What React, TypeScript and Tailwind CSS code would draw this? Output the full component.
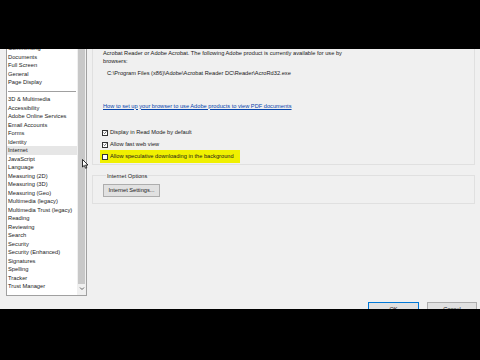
import React from "react";

const items = [
  "Commenting",
  "Documents",
  "Full Screen",
  "General",
  "Page Display",
  "-",
  "3D & Multimedia",
  "Accessibility",
  "Adobe Online Services",
  "Email Accounts",
  "Forms",
  "Identity",
  "Internet",
  "JavaScript",
  "Language",
  "Measuring (2D)",
  "Measuring (3D)",
  "Measuring (Geo)",
  "Multimedia (legacy)",
  "Multimedia Trust (legacy)",
  "Reading",
  "Reviewing",
  "Search",
  "Security",
  "Security (Enhanced)",
  "Signatures",
  "Spelling",
  "Tracker",
  "Trust Manager",
];

function CheckBox({ checked }: { checked: boolean }) {
  return (
    <span className="w-[6px] h-[6px] border border-[#333] bg-white flex items-center justify-center shrink-0">
      {checked && (
        <svg width="5" height="5" viewBox="0 0 10 10">
          <path d="M1.5 5.2 L4 7.8 L8.8 2" fill="none" stroke="#222" strokeWidth="1.6" />
        </svg>
      )}
    </span>
  );
}

export default function App() {
  return (
    <div className="w-[480px] h-[360px] bg-black flex flex-col font-['Liberation_Sans',Arial,sans-serif] text-[#1a1a1a]">
      <div className="h-[49px] shrink-0" />

      {/* dialog body */}
      <div className="relative h-[260px] bg-[#f0f0f0] overflow-hidden flex shrink-0">
        {/* category list */}
        <div className="ml-[6px] w-[81px] h-[247px] bg-white border-x border-b border-[#a0a0a0] flex overflow-hidden">
          <div className="w-[70px] -mt-[4.75px] text-[5.75px]">
            {items.map((it, i) =>
              it === "-" ? (
                <div key={i} className="h-[8.5px] flex items-center px-[1px]">
                  <div className="w-full h-px bg-[#a0a0a0]" />
                </div>
              ) : (
                <div
                  key={i}
                  className={
                    "h-[8.5px] leading-[8.5px] pl-[1px] whitespace-nowrap " +
                    (it === "Internet" ? "bg-[#e6e6e6]" : "")
                  }
                >
                  {it}
                </div>
              )
            )}
          </div>
          <div className="w-[9px] bg-[#f0f0f0] flex flex-col items-center">
            <div className="w-[7px] h-[235px] bg-[#c8c8c8]" />
            <svg className="mt-[2px]" width="6" height="5" viewBox="0 0 6 5">
              <path d="M1 1.5 L3 3.5 L5 1.5" fill="none" stroke="#606060" strokeWidth="1" />
            </svg>
          </div>
        </div>

        {/* settings panel */}
        <div className="ml-[5px] w-[388px] flex flex-col text-[5.68px]">
          <div className="w-[383px] h-[116px] border-x border-b border-[#e0e0e0] pl-[10px] shrink-0">
            <div className="leading-[8px]">
              Acrobat Reader or Adobe Acrobat. The following Adobe product is currently available for use by
            </div>
            <div className="leading-[8px]">browsers:</div>
            <div className="leading-[8px] mt-[4px] pl-[4px]">
              C:\Program Files (x86)\Adobe\Acrobat Reader DC\Reader\AcroRd32.exe
            </div>
            <div className="leading-[8px] mt-[24.5px] text-[#0645ad] underline">
              How to set up your browser to use Adobe products to view PDF documents
            </div>
            <div className="-ml-[1px] mt-[19px] flex flex-col">
              <div className="h-[8px] flex items-center gap-[2px]">
                <CheckBox checked />
                <span>Display in Read Mode by default</span>
              </div>
              <div className="h-[8px] mt-[4px] flex items-center gap-[2px]">
                <CheckBox checked />
                <span>Allow fast web view</span>
              </div>
              <div className="h-[13px] mt-[1.5px] w-[140px] -ml-[2px] pl-[2px] bg-[#f0f000] flex items-center gap-[2px]">
                <CheckBox checked={false} />
                <span>Allow speculative downloading in the background</span>
              </div>
            </div>
          </div>

          <fieldset className="mt-[6.5px] w-[383px] border border-[#e0e0e0] pl-[10px] pb-[6px] shrink-0">
            <legend className="ml-[3px] px-[1px] leading-[8px]">Internet Options</legend>
            <button className="mt-[4.5px] w-[57px] h-[13px] bg-[#e1e1e1] border border-[#adadad] leading-[11px] text-center">
              Internet Settings...
            </button>
          </fieldset>

          <div className="mt-[98px] flex justify-end gap-[8px] pr-[3px] shrink-0">
            <button className="w-[51px] h-[13px] bg-[#e1e1e1] border border-[#0078d7] leading-[8px] text-center">
              OK
            </button>
            <button className="w-[50px] h-[13px] bg-[#e1e1e1] border border-[#adadad] leading-[8px] text-center">
              Cancel
            </button>
          </div>
        </div>

        {/* mouse pointer */}
        <svg className="absolute left-[82px] top-[110px]" width="7" height="10" viewBox="0 0 7 10">
          <path d="M0.5 0.5 L0.5 8 L2.3 6.4 L3.6 9.3 L4.8 8.8 L3.6 6 L6 6 Z" fill="#fff" stroke="#000" strokeWidth="0.8" />
        </svg>
      </div>

      <div className="flex-1" />
    </div>
  );
}
